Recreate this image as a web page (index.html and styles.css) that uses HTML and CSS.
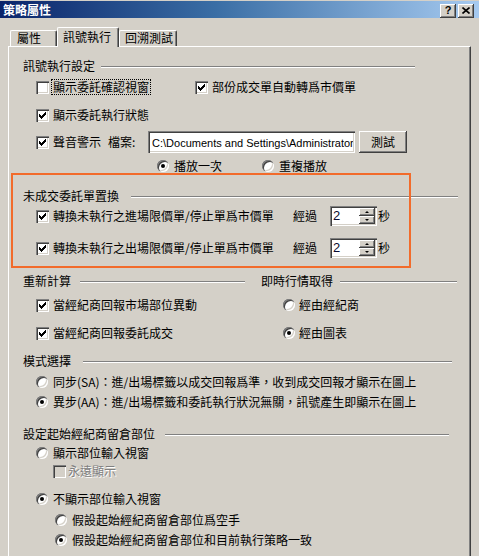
FILE: index.html
```html
<!DOCTYPE html>
<html lang="zh-Hant">
<head>
<meta charset="utf-8">
<title>策略屬性</title>
<link rel="stylesheet" href="styles.css">
</head>
<body>
<svg class="defs" width="0" height="0" aria-hidden="true">
  <defs>
    <symbol id="chk" viewBox="0 0 7 7">
      <rect x="0" y="2" width="1" height="3"/>
      <rect x="1" y="3" width="1" height="3"/>
      <rect x="2" y="4" width="1" height="3"/>
      <rect x="3" y="3" width="1" height="3"/>
      <rect x="4" y="2" width="1" height="3"/>
      <rect x="5" y="1" width="1" height="3"/>
      <rect x="6" y="0" width="1" height="3"/>
    </symbol>
  </defs>
</svg>

<div class="titlebar">
  <span class="title">策略屬性</span>
  <div class="caps">
    <span class="cbtn help">?</span>
    <span class="cbtn"><svg width="8" height="7" viewBox="0 0 8 7"><path d="M0.5 0.5 L7.5 6.5 M7.5 0.5 L0.5 6.5" stroke="#000" stroke-width="1.6" fill="none"/></svg></span>
  </div>
</div>

<div class="tabs">
  <div class="tab t1">屬性</div>
  <div class="tab active t2">訊號執行</div>
  <div class="tab t3">回溯測試</div>
</div>

<div class="panel">
  <div class="hdr h1"><span class="lbl">訊號執行設定</span><span class="line"></span></div>

  <div class="row mt7">
    <div class="opt w159"><span class="cb"></span><span class="focus">顯示委託確認視窗</span></div>
    <div class="opt"><span class="cb"><svg class="ck"><use href="#chk"/></svg></span><span>部份成交單自動轉爲市價單</span></div>
  </div>

  <div class="row mt14">
    <div class="opt"><span class="cb"><svg class="ck"><use href="#chk"/></svg></span><span>顯示委託執行狀態</span></div>
  </div>

  <div class="row tall mt9">
    <div class="opt"><span class="cb"><svg class="ck"><use href="#chk"/></svg></span><span>聲音警示</span></div>
    <span class="filelabel">檔案:</span>
    <div class="textbox"><span class="path">C:\Documents and Settings\Administrator\</span></div>
    <div class="button">測試</div>
  </div>

  <div class="row mt6 radios">
    <div class="opt w105"><span class="rb on"></span><span>播放一次</span></div>
    <div class="opt"><span class="rb"></span><span>重複播放</span></div>
  </div>

  <div class="hdr h2 mt16"><span class="lbl">未成交委託單置換</span><span class="line"></span></div>

  <div class="row spinrow mt3">
    <div class="opt"><span class="cb"><svg class="ck"><use href="#chk"/></svg></span><span class="longtext">轉換未執行之進場限價單/停止單爲市價單</span></div>
    <span class="after">經過</span>
    <div class="spin"><span class="val">2</span><span class="sbtns"><span class="sb"><i class="up"></i></span><span class="sb"><i class="down"></i></span></span></div>
    <span class="sec">秒</span>
  </div>

  <div class="row spinrow mt12">
    <div class="opt"><span class="cb"><svg class="ck"><use href="#chk"/></svg></span><span class="longtext">轉換未執行之出場限價單/停止單爲市價單</span></div>
    <span class="after">經過</span>
    <div class="spin"><span class="val">2</span><span class="sbtns"><span class="sb"><i class="up"></i></span><span class="sb"><i class="down"></i></span></span></div>
    <span class="sec">秒</span>
  </div>

  <div class="split mt16">
    <div class="col left">
      <div class="hdr"><span class="lbl">重新計算</span><span class="line l9"></span></div>
      <div class="row mt10">
        <div class="opt"><span class="cb"><svg class="ck"><use href="#chk"/></svg></span><span>當經紀商回報市場部位異動</span></div>
      </div>
      <div class="row mt14">
        <div class="opt"><span class="cb"><svg class="ck"><use href="#chk"/></svg></span><span>當經紀商回報委託成交</span></div>
      </div>
    </div>
    <div class="col right">
      <div class="hdr"><span class="lbl">即時行情取得</span><span class="line l7"></span></div>
      <div class="row mt10">
        <div class="opt"><span class="rb"></span><span>經由經紀商</span></div>
      </div>
      <div class="row mt14">
        <div class="opt"><span class="rb on"></span><span>經由圖表</span></div>
      </div>
    </div>
  </div>

  <div class="hdr h4 mt14"><span class="lbl">模式選擇</span><span class="line"></span></div>
  <div class="row mt7">
    <div class="opt"><span class="rb"></span><span>同步(SA)：進/出場標籤以成交回報爲準，收到成交回報才顯示在圖上</span></div>
  </div>
  <div class="row mt6">
    <div class="opt"><span class="rb on"></span><span>異步(AA)：進/出場標籤和委託執行狀況無關，訊號產生即顯示在圖上</span></div>
  </div>

  <div class="hdr h5 mt18"><span class="lbl">設定起始經紀商留倉部位</span><span class="line"></span></div>
  <div class="row mt5">
    <div class="opt"><span class="rb"></span><span>顯示部位輸入視窗</span></div>
  </div>
  <div class="row sub1 mt4">
    <div class="opt"><span class="cb dis"></span><span class="distext">永遠顯示</span></div>
  </div>
  <div class="row mt14">
    <div class="opt"><span class="rb on"></span><span>不顯示部位輸入視窗</span></div>
  </div>
  <div class="row sub2 mt7">
    <div class="opt"><span class="rb"></span><span>假設起始經紀商留倉部位爲空手</span></div>
  </div>
  <div class="row sub2 mt6">
    <div class="opt"><span class="rb on"></span><span>假設起始經紀商留倉部位和目前執行策略一致</span></div>
  </div>
</div>

<div class="highlight"></div>
</body>
</html>
```

FILE: styles.css
```css
* { box-sizing: border-box; }
html, body { margin: 0; padding: 0; }
body {
  width: 479px;
  height: 556px;
  overflow: hidden;
  position: relative;
  background: #D4D0C8;
  color: #000;
  font-family: "Noto Sans CJK TC", "Noto Sans CJK SC", sans-serif;
  font-size: 12px;
  line-height: 14px;
}
.defs { position: absolute; width: 0; height: 0; }

/* title bar */
.titlebar {
  margin-top: 1px;
  height: 17px;
  background: linear-gradient(to right, #0A246A 0%, #3A6EA5 45%, #A6CAF0 100%);
  display: flex;
  align-items: center;
  padding: 0 5px 0 3px;
}
.title { flex: 1; color: #fff; font-weight: bold; letter-spacing: 0; }
.caps { display: flex; gap: 2px; align-self: flex-start; margin-top: 3px; }
.cbtn {
  width: 16px; height: 14px;
  background: #D4D0C8;
  box-shadow: inset -1px -1px 0 #404040, inset 1px 1px 0 #fff, inset -2px -2px 0 #808080;
  display: flex; align-items: center; justify-content: center;
  font: bold 11px/1 "Liberation Sans", sans-serif;
  padding-bottom: 1px;
}

/* tabs */
.tabs { height: 28px; display: flex; align-items: flex-end; padding-left: 10px; }
.tab {
  height: 16px;
  border-top: 1px solid #fff;
  border-left: 1px solid #fff;
  border-right: 1px solid #404040;
  box-shadow: inset -1px 0 0 #808080;
  border-radius: 2px 2px 0 0;
  padding: 0 0 0 6px;
  line-height: 14px;
  white-space: nowrap;
}
.t1 { width: 47px; }
.t2 { width: 62px; }
.t3 { width: 58px; padding-left: 5px; }
.tab.active {
  height: 20px;
  margin-bottom: -1px;
  position: relative;
  z-index: 1;
  background: #D4D0C8;
  padding: 2px 0 0 5px;
}

/* panel */
.panel {
  margin-left: 8px;
  width: 463px;
  height: 510px;
  border-top: 1px solid #fff;
  border-left: 1px solid #fff;
  border-right: 1px solid #404040;
  box-shadow: inset -1px 0 0 #808080;
  padding: 12px 0 0 14px;
}

/* section headers */
.hdr { display: flex; align-items: center; height: 14px; }
.hdr .lbl { white-space: nowrap; }
.hdr .line {
  flex: 1;
  height: 2px;
  margin-top: 2px;
  border-top: 1px solid #808080;
  border-bottom: 1px solid #fff;
}
.h1 .line { margin-left: 6px; margin-right: 55px; }
.h2 .line { margin-left: 12px; margin-right: 12px; }
.h4 .line { margin-left: 12px; margin-right: 18px; }
.h5 .line { margin-left: 10px; margin-right: 21px; }
.line.l9 { margin-left: 9px; }
.line.l7 { margin-left: 7px; margin-right: 13px; }

/* rows */
.row { display: flex; align-items: center; height: 14px; padding-left: 13px; white-space: nowrap; }
.row.tall { height: 22px; }
.row.spinrow { height: 20px; }
.row.radios { padding-left: 134px; }
.row.sub1 { padding-left: 30px; }
.row.sub2 { padding-left: 32px; }
.opt { display: flex; align-items: center; }
.w159 { width: 159px; }
.w105 { width: 105px; }

.mt3 { margin-top: 3px; }
.mt4 { margin-top: 4px; }
.mt5 { margin-top: 5px; }
.mt6 { margin-top: 6px; }
.mt7 { margin-top: 7px; }
.mt9 { margin-top: 9px; }
.mt10 { margin-top: 10px; }
.mt12 { margin-top: 12px; }
.mt14 { margin-top: 14px; }
.mt16 { margin-top: 16px; }
.mt18 { margin-top: 18px; }

/* checkbox */
.cb {
  flex: none;
  width: 13px; height: 13px;
  margin-right: 4px;
  background: #fff;
  box-shadow: inset 1px 1px 0 #808080, inset 2px 2px 0 #404040, inset -1px -1px 0 #fff, inset -2px -2px 0 #D4D0C8;
  display: flex; align-items: center; justify-content: center;
}
.cb .ck { width: 7px; height: 7px; fill: #000; }
.cb.dis { background: #D4D0C8; margin-right: 2px; }
.distext { color: #808080; text-shadow: 1px 1px 0 #fff; }
.focus { outline: 1px dotted #000; padding: 0 1px; margin-left: -1px; }

/* radio */
.rb {
  flex: none;
  width: 12px; height: 12px;
  margin-right: 5px;
  border-radius: 50%;
  background: #fff;
  box-shadow: inset 1px 1px 0 #808080, inset 2px 2px 0 #404040, inset -1px -1px 0 #fff, inset -2px -2px 0 #D4D0C8;
  display: flex; align-items: center; justify-content: center;
}
.rb.on::after {
  content: "";
  width: 4px; height: 4px;
  border-radius: 50%;
  background: #000;
}

/* file row */
.filelabel { margin-left: 7px; width: 40px; }
.textbox {
  width: 207px; height: 22px;
  background: #fff;
  box-shadow: inset 1px 1px 0 #808080, inset 2px 2px 0 #404040, inset -1px -1px 0 #fff, inset -2px -2px 0 #D4D0C8;
  padding: 2px 2px 0 4px;
  overflow: hidden;
  display: flex; align-items: center;
}
.path {
  flex: 1;
  min-width: 0;
  overflow: hidden;
  font: 11px/16px "Liberation Sans", Arial, sans-serif;
  white-space: nowrap;
}
.button {
  margin-left: 4px;
  width: 48px; height: 22px;
  background: #D4D0C8;
  box-shadow: inset -1px -1px 0 #404040, inset 1px 1px 0 #fff, inset -2px -2px 0 #808080;
  display: flex; align-items: center; justify-content: center;
}

/* spinner rows */
.longtext { width: 240px; }
.after { width: 24px; margin-right: 13px; }
.spin {
  width: 47px; height: 20px;
  background: #fff;
  box-shadow: inset 1px 1px 0 #808080, inset 2px 2px 0 #404040, inset -1px -1px 0 #fff, inset -2px -2px 0 #D4D0C8;
  padding: 2px;
  display: flex;
}
.val { flex: 1; padding-left: 1px; font: 13px/16px "Liberation Sans", Arial, sans-serif; color: #0a0a30; }
.sbtns { width: 16px; display: flex; flex-direction: column; }
.sb {
  flex: 1;
  background: #D4D0C8;
  box-shadow: inset -1px -1px 0 #404040, inset 1px 1px 0 #fff, inset -2px -2px 0 #808080;
  display: flex; align-items: center; justify-content: center;
}
.sb i { display: block; width: 0; height: 0; border-left: 2px solid transparent; border-right: 2px solid transparent; }
.sb i.up { border-bottom: 2px solid #000; margin-bottom: 1px; }
.sb i.down { border-top: 2px solid #000; margin-bottom: 1px; }
.sec { margin-left: 1px; }

/* two column section */
.split { display: grid; grid-template-columns: 222px 1fr; }
.col.right .hdr { padding-left: 16px; }
.col.right .row { padding-left: 38px; }
.col.right .rb { margin-right: 4px; }

/* annotation overlay */
.highlight {
  position: absolute;
  left: 11px; top: 173px;
  width: 400px; height: 95px;
  border: 2px solid #F26B2B;
  pointer-events: none;
}
```
